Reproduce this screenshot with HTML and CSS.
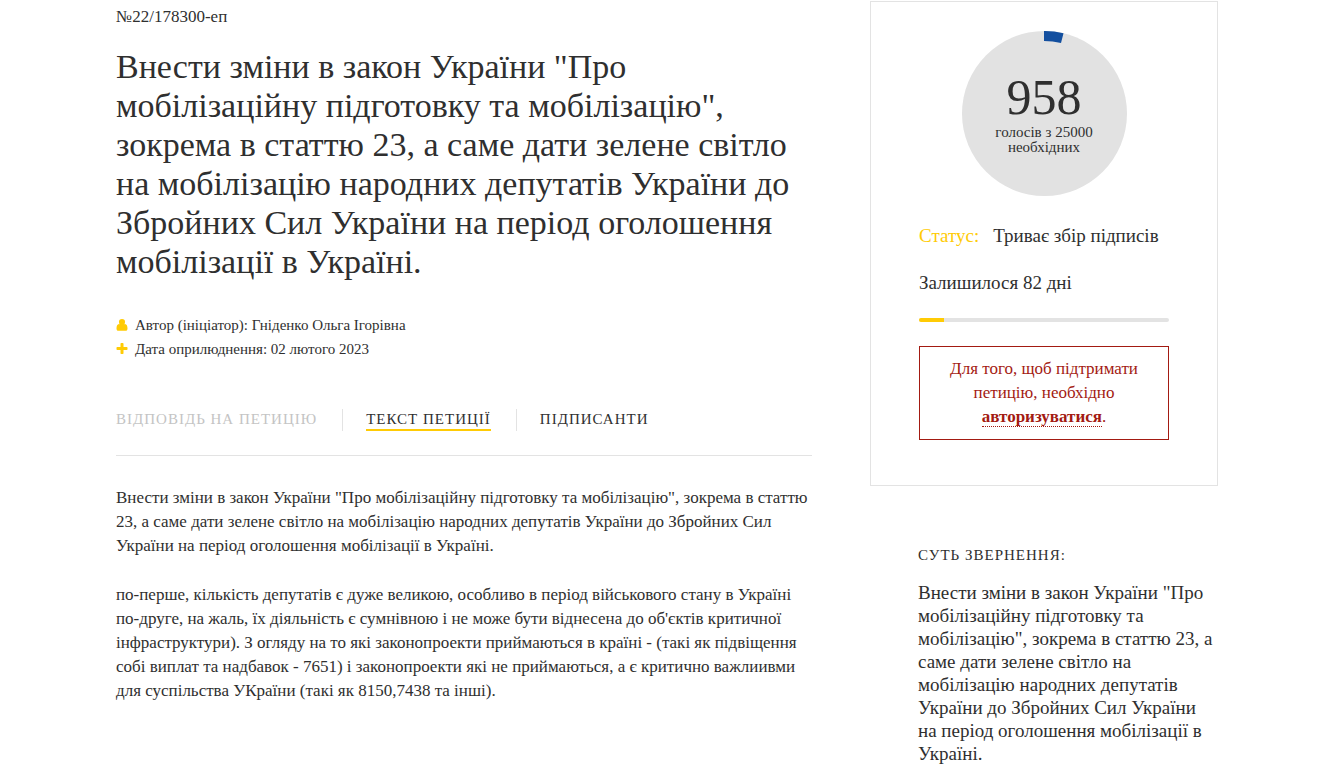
FILE: index.html
```html
<!DOCTYPE html>
<html lang="uk">
<head>
<meta charset="utf-8">
<meta name="viewport" content="width=device-width, initial-scale=1">
<title>Петиція №22/178300-еп</title>
<link rel="stylesheet" href="styles.css">
</head>
<body>
<div class="page">
  <main class="petition">
    <div class="number">№22/178300-еп</div>
    <h1 class="title">Внести зміни в закон України "Про<br>мобілізаційну підготовку та мобілізацію",<br>зокрема в статтю 23, а саме дати зелене світло<br>на мобілізацію народних депутатів України до<br>Збройних Сил України на період оголошення<br>мобілізації в Україні.</h1>
    <ul class="meta">
      <li class="meta-item">
        <svg class="meta-icon" viewBox="0 0 12 12" aria-hidden="true"><path d="M6 0a3 3 0 0 1 3 3.200c0 1.900-1.300 3.400-3 3.400S3 5.100 3 3.200A3 3 0 0 1 6 0zM3 5.100a4 4 0 0 0 6 0c1.700.2 2.500 1.900 2.500 4.400 0 1.500-.7 2.300-1.900 2.300H2.400C1.200 11.800.5 11 .5 9.500.5 7 1.300 5.300 3 5.100z"/></svg>
        <span>Автор (ініціатор): Гніденко Ольга Ігорівна</span>
      </li>
      <li class="meta-item">
        <svg class="meta-icon" viewBox="0 0 12 12" aria-hidden="true"><path d="M5.200 0h1.600a.7.7 0 0 1 .7.700V4h3.300a.7.7 0 0 1 .7.700v1.600a.7.7 0 0 1-.7.700H7.500v3.300a.7.7 0 0 1-.7.700H5.200a.7.7 0 0 1-.7-.7V7H1.200a.7.7 0 0 1-.7-.7V4.700A.7.7 0 0 1 1.200 4h3.300V.7a.7.7 0 0 1 .7-.7z"/></svg>
        <span>Дата оприлюднення: 02 лютого 2023</span>
      </li>
    </ul>
    <nav class="tabs">
      <span class="tab"><a class="tab-link tab-disabled" aria-disabled="true">Відповідь на петицію</a></span>
      <span class="tab"><a class="tab-link tab-active" href="#text">Текст петиції</a></span>
      <span class="tab"><a class="tab-link" href="#votes">Підписанти</a></span>
    </nav>
    <article class="text" id="text">
      <p class="paragraph">Внести зміни в закон України "Про мобілізаційну підготовку та мобілізацію", зокрема в статтю<br>23, а саме дати зелене світло на мобілізацію народних депутатів України до Збройних Сил<br>України на період оголошення мобілізації в Україні.</p>
      <p class="paragraph">по-перше, кількість депутатів є дуже великою, особливо в період військового стану в Україні<br>по-друге, на жаль, їх діяльність є сумнівною і не може бути віднесена до об'єктів критичної<br>інфраструктури). З огляду на то які законопроекти приймаються в країні - (такі як підвіщення<br>собі виплат та надбавок - 7651) і законопроекти які не приймаються, а є критично важлиивми<br>для суспільства УКраїни (такі як 8150,7438 та інші).</p>
    </article>
  </main>
  <aside class="side">
    <section class="card">
      <div class="votes">
        <svg class="votes-arc" viewBox="0 0 165 165" aria-hidden="true"><path d="M82 0A82.500 82.500 0 0 1 101.500 2.200L99 12A72.500 72.500 0 0 0 82 10z"/></svg>
        <strong class="votes-count">958</strong>
        <span class="votes-label">голосів з 25000<br>необхідних</span>
      </div>
      <div class="status"><span class="status-name">Статус:</span><span>Триває збір підписів</span></div>
      <div class="days">Залишилося 82 дні</div>
      <div class="bar"><div class="bar-fill" style="width: 10%"></div></div>
      <p class="notice">Для того, щоб підтримати<br>петицію, необхідно<br><a class="login" href="#login">авторизуватися</a>.</p>
    </section>
    <section class="summary">
      <h2 class="summary-title">Суть звернення:</h2>
      <p class="summary-text">Внести зміни в закон України "Про<br>мобілізаційну підготовку та<br>мобілізацію", зокрема в статтю 23, а<br>саме дати зелене світло на<br>мобілізацію народних депутатів<br>України до Збройних Сил України<br>на період оголошення мобілізації в<br>Україні.</p>
    </section>
  </aside>
</div>
</body>
</html>
```
FILE: styles.css
```css
* {
  box-sizing: border-box;
}

body {
  margin: 0;
  background: #fff;
  color: #2f2f2f;
  font-family: Georgia, "Liberation Serif", serif;
  font-size: 17px;
  line-height: 24px;
}

.page {
  display: grid;
  grid-template-columns: 2fr 1fr;
  column-gap: 58px;
  padding: 0 102px 0 116px;
}

.petition {
  padding-top: 5px;
}

.title {
  margin: 18px 0 32px;
  font-size: 34px;
  font-weight: 400;
  line-height: 39px;
  white-space: nowrap;
}

.meta {
  margin: 0;
  padding: 0;
  list-style: none;
  font-size: 15px;
}

.meta-item {
  display: flex;
  align-items: center;
  gap: 7px;
}

.meta-icon {
  width: 12px;
  height: 12px;
  fill: #ffcb05;
}

.tabs {
  display: flex;
  align-items: center;
  margin-top: 36px;
  padding: 12px 0 24px;
  border-bottom: 1px solid #e3e3e3;
  font-size: 15px;
  line-height: 22px;
  letter-spacing: 1px;
  text-transform: uppercase;
  white-space: nowrap;
}

.tab + .tab {
  margin-left: 25px;
  padding-left: 23px;
  border-left: 1px solid #e3e3e3;
}

.tab-link {
  display: block;
  border-bottom: 2px solid transparent;
  line-height: 20px;
  color: inherit;
  text-decoration: none;
}

.tab-disabled {
  color: #c4c4c4;
}

.tab-active {
  border-color: #ffcb05;
}

.text {
  padding-top: 30px;
}

.paragraph {
  margin: 0 0 25px;
  white-space: nowrap;
}

.card {
  margin-top: 1px;
  padding: 29px 48px 45px;
  border: 1px solid #e3e3e3;
}

.votes {
  position: relative;
  display: flex;
  flex-direction: column;
  align-items: center;
  width: 165px;
  height: 165px;
  margin: 0 auto;
  padding-top: 38px;
  border-radius: 50%;
  background: #e2e2e2;
}

.votes-arc {
  position: absolute;
  inset: 0;
  fill: #134f9f;
}

.votes-count {
  font-size: 50px;
  font-weight: 400;
  line-height: 56px;
}

.votes-label {
  font-size: 15px;
  line-height: 15px;
  text-align: center;
}

.status {
  display: flex;
  gap: 14px;
  margin-top: 28px;
  font-size: 19px;
  white-space: nowrap;
}

.status-name {
  color: #ffcb05;
}

.days {
  margin-top: 23px;
  font-size: 19px;
}

.bar {
  height: 4px;
  margin: 23px 0 24px;
  border-radius: 2px;
  background: #e3e3e3;
  overflow: hidden;
}

.bar-fill {
  height: 100%;
  background: #ffcb05;
}

.notice {
  margin: 0;
  padding: 10px 0;
  border: 1px solid #a31a12;
  color: #a31a12;
  text-align: center;
}

.login {
  border-bottom: 1px dotted #a31a12;
  color: inherit;
  font-weight: 700;
  text-decoration: none;
}

.summary {
  padding: 57px 0 0 48px;
}

.summary-title {
  margin: 0 0 14px;
  font-size: 15px;
  font-weight: 400;
  line-height: 24px;
  letter-spacing: 1px;
  text-transform: uppercase;
}

.summary-text {
  margin: 0;
  font-size: 19px;
  line-height: 23px;
  white-space: nowrap;
}
```
